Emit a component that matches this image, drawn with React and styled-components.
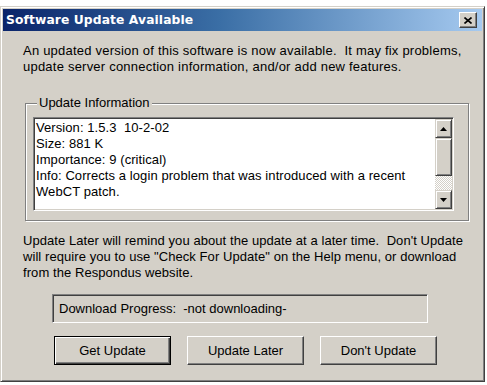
import React from "react";
import styled, { createGlobalStyle } from "styled-components";

const GlobalStyle = createGlobalStyle`
  html, body {
    margin: 0;
    padding: 0;
    background: #ffffff;
  }
`;

const Window = styled.div`
  box-sizing: border-box;
  margin: 6px 0 0 0;
  width: 485px;
  height: 376px;
  background: #d4d0c8;
  border: 1px solid;
  border-color: #d4d0c8 #404040 #404040 #d4d0c8;
  box-shadow: inset 1px 1px 0 #ffffff, inset -1px -1px 0 #808080;
  padding: 2px;
  display: flex;
  flex-direction: column;
  font-family: "Liberation Sans", Arial, sans-serif;
  font-size: 13px;
  color: #000000;
`;

const TitleBar = styled.div`
  height: 22px;
  display: flex;
  align-items: center;
  justify-content: space-between;
  padding: 0 5px 0 3px;
  background: linear-gradient(to right, #0a246a 0%, #3a6ea5 45%, #a6caf0 100%);
`;

const Title = styled.span`
  color: #ffffff;
  font-family: "DejaVu Sans", Verdana, sans-serif;
  font-weight: bold;
  font-size: 12.3px;
  letter-spacing: 0.1px;
`;

const CloseButton = styled.div`
  box-sizing: border-box;
  width: 18px;
  height: 16px;
  background: #d4d0c8;
  border: 1px solid;
  border-color: #ffffff #404040 #404040 #ffffff;
  box-shadow: inset -1px -1px 0 #808080;
  display: flex;
  align-items: center;
  justify-content: center;
`;

const Body = styled.div`
  flex: 1;
  display: flex;
  flex-direction: column;
  padding: 12px 0 0 20px;
`;

const Text = styled.p`
  margin: ${(p) => p.$top || 0}px 0 0 0;
  white-space: pre;
  line-height: 16px;
  letter-spacing: ${(p) => p.$track || 0}px;
`;

const GroupBox = styled.fieldset`
  box-sizing: border-box;
  margin: 20px 0 0 2px;
  width: 444px;
  height: 126px;
  padding: 6px 14px 5px 7px;
  border: 1px solid #808080;
  box-shadow: inset 1px 1px 0 #ffffff, 1px 1px 0 #ffffff;
`;

const Legend = styled.legend`
  margin-left: 4px;
  padding: 0 2px;
  background: #d4d0c8;
  line-height: 16px;
`;

const InfoBox = styled.div`
  box-sizing: border-box;
  height: 94px;
  background: #ffffff;
  border: 1px solid;
  border-color: #808080 #ffffff #ffffff #808080;
  box-shadow: inset 1px 1px 0 #404040, inset -1px -1px 0 #d4d0c8;
  display: flex;
`;

const InfoText = styled.div`
  flex: 1;
  padding: 2px 0 0 2px;
  line-height: 16px;
  white-space: pre;
  letter-spacing: 0.08px;
`;

const ScrollBar = styled.div`
  width: 17px;
  margin: 1px 1px 1px 0;
  display: flex;
  flex-direction: column;
`;

const ScrollButton = styled.div`
  box-sizing: border-box;
  height: ${(p) => p.$h}px;
  background: #d4d0c8;
  border: 1px solid;
  border-color: #d4d0c8 #404040 #404040 #d4d0c8;
  box-shadow: inset 1px 1px 0 #ffffff, inset -1px -1px 0 #808080;
  display: flex;
  align-items: center;
  justify-content: center;
`;

const Track = styled.div`
  flex: 1;
  background-color: #ffffff;
  background-image: repeating-conic-gradient(#d4d0c8 0% 25%, #ffffff 0% 50%);
  background-size: 2px 2px;
`;

const ProgressBox = styled.div`
  box-sizing: border-box;
  margin: 13px 0 0 29px;
  width: 376px;
  height: 29px;
  border: 1px solid;
  border-color: #808080 #ffffff #ffffff #808080;
  box-shadow: inset 1px 1px 0 #404040;
  padding: 6px 0 0 6px;
  white-space: pre;
  line-height: 16px;
`;

const ButtonRow = styled.div`
  display: flex;
  gap: 16px;
  margin: 13px 0 0 31px;
`;

const Button = styled.div`
  box-sizing: border-box;
  width: 117px;
  height: 29px;
  display: flex;
  align-items: center;
  justify-content: center;
  background: #d4d0c8;
  border: 1px solid;
  border-color: ${(p) =>
    p.$default ? "#000000" : "#ffffff #404040 #404040 #ffffff"};
  box-shadow: ${(p) =>
    p.$default
      ? "inset 1px 1px 0 #ffffff, inset -1px -1px 0 #404040, inset -2px -2px 0 #808080"
      : "inset -1px -1px 0 #808080"};
`;

const Arrow = ({ up }) => (
  <svg width="7" height="4" viewBox="0 0 7 4">
    <polygon points={up ? "3.5,0 7,4 0,4" : "0,0 7,0 3.5,4"} fill="#000" />
  </svg>
);

export default function App() {
  return (
    <>
      <GlobalStyle />
      <Window>
        <TitleBar>
          <Title>Software Update Available</Title>
          <CloseButton>
            <svg width="8" height="7" viewBox="0 0 8 7">
              <path d="M0.5 0.5 L7.5 6.5 M7.5 0.5 L0.5 6.5" stroke="#000" strokeWidth="1.6" />
            </svg>
          </CloseButton>
        </TitleBar>
        <Body>
          <Text $track={0.22}>
            {"An updated version of this software is now available.  It may fix problems,\nupdate server connection information, and/or add new features."}
          </Text>
          <GroupBox>
            <Legend>Update Information</Legend>
            <InfoBox>
              <InfoText>
                {"Version: 1.5.3  10-2-02\nSize: 881 K\nImportance: 9 (critical)\nInfo: Corrects a login problem that was introduced with a recent\nWebCT patch."}
              </InfoText>
              <ScrollBar>
                <ScrollButton $h={19}>
                  <Arrow up />
                </ScrollButton>
                <ScrollButton $h={38} />
                <Track />
                <ScrollButton $h={19}>
                  <Arrow />
                </ScrollButton>
              </ScrollBar>
            </InfoBox>
          </GroupBox>
          <Text $top={12} $track={0.07}>
            {"Update Later will remind you about the update at a later time.  Don't Update\nwill require you to use \"Check For Update\" on the Help menu, or download\nfrom the Respondus website."}
          </Text>
          <ProgressBox>{"Download Progress:  -not downloading-"}</ProgressBox>
          <ButtonRow>
            <Button $default>Get Update</Button>
            <Button>Update Later</Button>
            <Button>Don't Update</Button>
          </ButtonRow>
        </Body>
      </Window>
    </>
  );
}
